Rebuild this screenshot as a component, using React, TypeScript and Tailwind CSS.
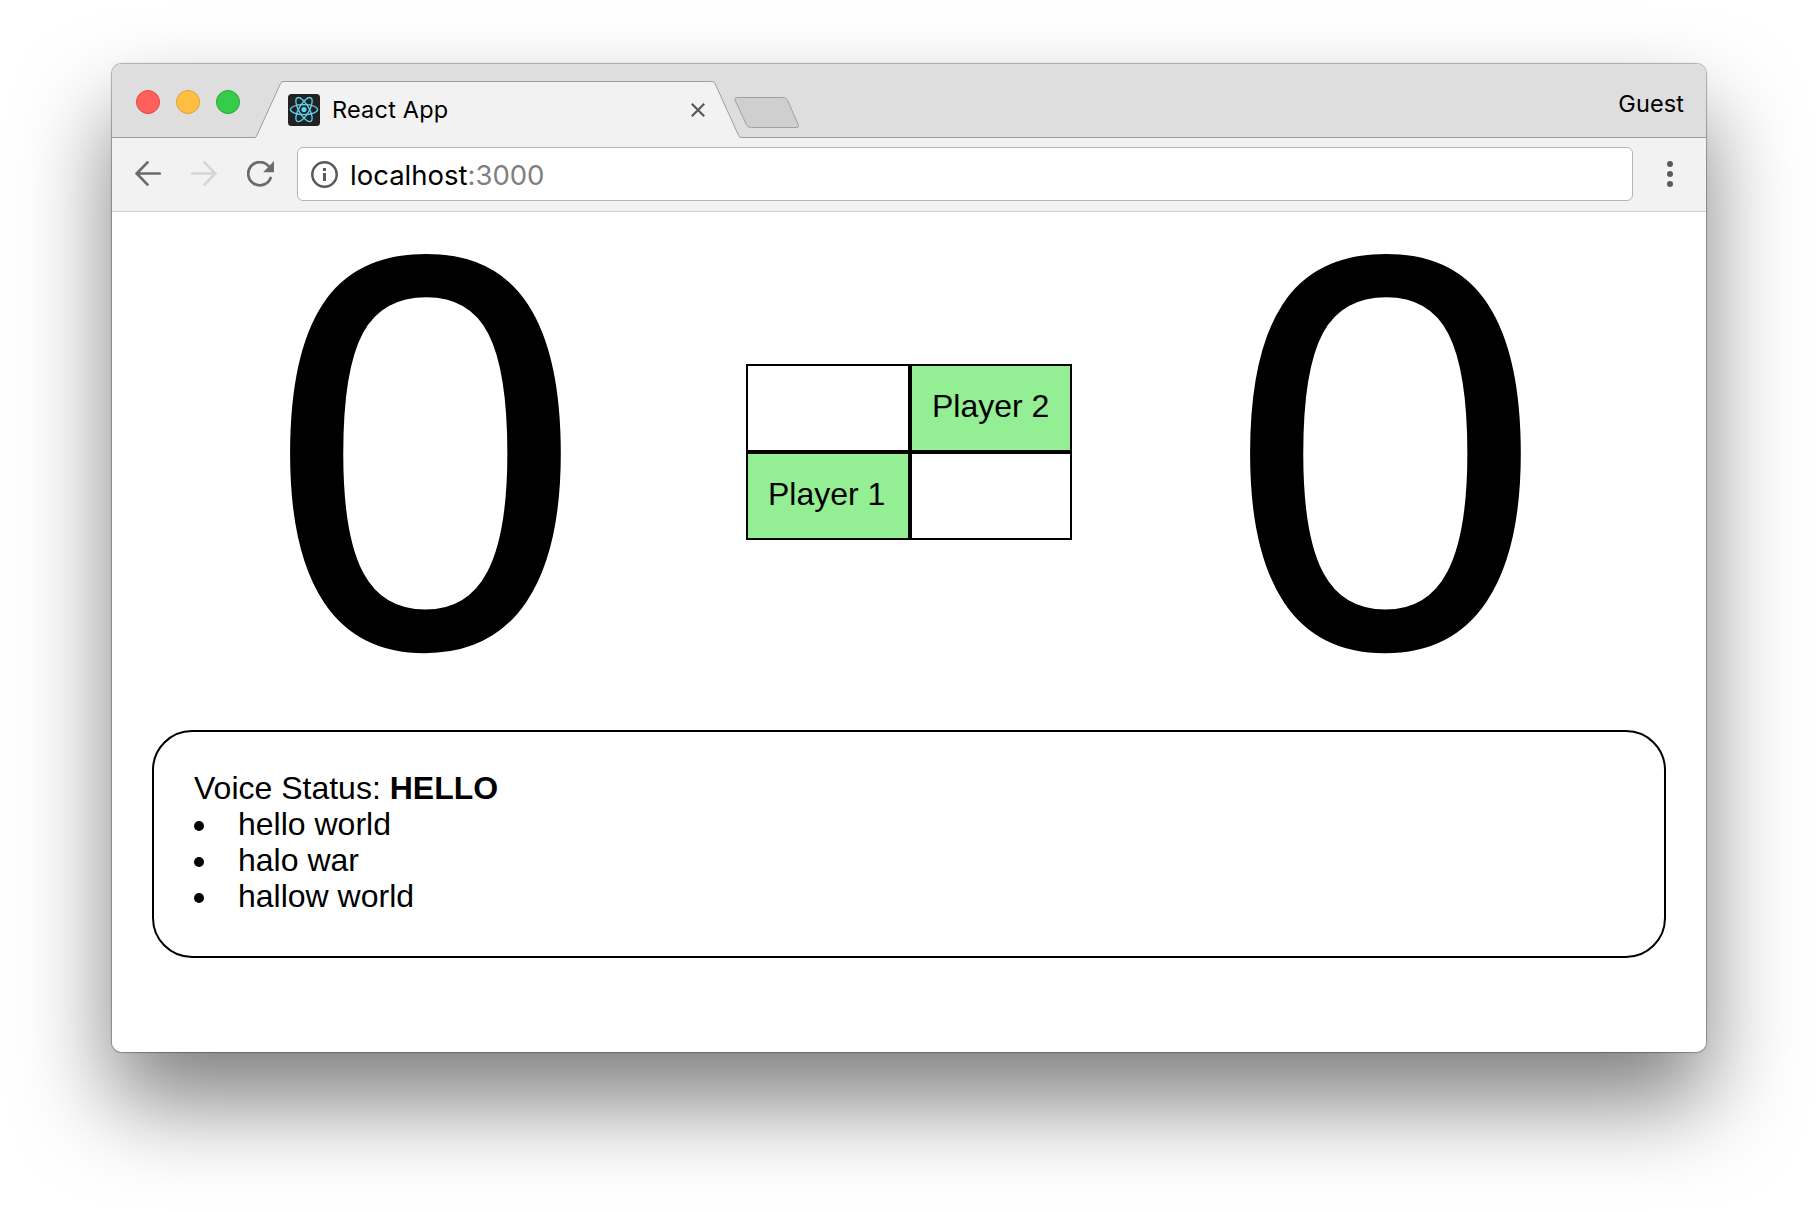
import React from "react";

const phrases = ["hello world", "halo war", "hallow world"];

function TrafficLights() {
  return (
    <div className="flex w-[144px] shrink-0 gap-4 pt-[26px] pl-6">
      <span className="size-6 rounded-full border border-[#e2463f] bg-[#ff605c]" />
      <span className="size-6 rounded-full border border-[#dfa033] bg-[#ffbf41]" />
      <span className="size-6 rounded-full border border-[#27a834] bg-[#35cb4b]" />
    </div>
  );
}

function ReactLogo() {
  return (
    <svg className="size-8 shrink-0" viewBox="0 0 32 32" fill="none">
      <rect width="32" height="32" rx="3.5" fill="#222" />
      <g stroke="#5fd3f3" strokeWidth="1.3">
        <ellipse cx="16" cy="15.6" rx="13.6" ry="5.1" />
        <ellipse cx="16" cy="15.6" rx="13.6" ry="5.1" transform="rotate(60 16 15.6)" />
        <ellipse cx="16" cy="15.6" rx="13.6" ry="5.1" transform="rotate(120 16 15.6)" />
      </g>
      <circle cx="16" cy="15.6" r="2.6" fill="#5fd3f3" />
    </svg>
  );
}

function TabStrip() {
  return (
    <div className="flex h-[74px] border-b border-[#9d9d9d] bg-[#dedede]">
      <TrafficLights />
      <div className="relative -ml-px h-[74px] w-[486px] shrink-0">
        <svg className="absolute inset-0" width="486" height="74" viewBox="0 0 486 74" fill="none">
          <path
            d="M0 74 Q0.6 73.5 1.4 72.5 L25.6 19.4 Q26.6 17.5 29 17.5 H456.5 Q459 17.5 460 19.4 L483.6 71.5 Q484.4 73.5 486 73.5 V74 Z"
            fill="#f2f2f2"
          />
          <path
            d="M0 73.5 Q0.8 73.5 1.6 72 L25.6 19.4 Q26.6 17.5 29 17.5 H456.5 Q459 17.5 460 19.4 L483.6 71.5 Q484.4 73.5 486 73.5"
            stroke="#9d9d9d"
          />
        </svg>
        <div className="relative mt-[30px] flex h-8 items-center pl-[33px]">
          <ReactLogo />
          <span className="ml-3 flex-1 font-[Inter] text-[23.5px] leading-8 tracking-[0.2px] text-black">React App</span>
          <svg className="mr-[36px] size-[14px]" viewBox="0 0 14 14" stroke="#5a5a5a" strokeWidth="2.2">
            <path d="M0.8 0.8 13.2 13.2M13.2 0.8 0.8 13.2" />
          </svg>
        </div>
      </div>
      <svg className="mt-8 -ml-[7px] shrink-0" width="68" height="36" viewBox="0 0 68 36" fill="none">
        <path
          d="M3.5 1.5 H48.5 Q52 1.5 53.5 4.2 L64.4 29 Q65.4 31.5 62.5 31.5 H17.5 Q14 31.5 12.6 29 L1.2 4.5 Q0 1.5 3.5 1.5 Z"
          fill="#cfcfcf"
          stroke="#9f9f9f"
        />
      </svg>
      <span className="ml-auto mr-[22px] pt-6 font-[Inter] text-[23.5px] leading-8 tracking-[0.1px] text-black">Guest</span>
    </div>
  );
}

function Toolbar() {
  return (
    <div className="flex h-[74px] items-center border-b border-[#d0d0d0] bg-[#f2f2f2] pb-px pl-[23px]">
      <svg className="size-[26px]" viewBox="0 0 26 26" fill="none" stroke="#6b6b6b" strokeWidth="2.7" strokeLinecap="round">
        <path d="M24.7 12.5H2M12.5 1.4 1.7 12.5 12.5 23.6" />
      </svg>
      <svg className="ml-[30px] size-[26px]" viewBox="0 0 26 26" fill="none" stroke="#d6d6d6" strokeWidth="2.7" strokeLinecap="round">
        <path d="M1.3 12.5H24M13.5 1.4 24.3 12.5 13.5 23.6" />
      </svg>
      <svg className="ml-[30px] h-[26px] w-[27px]" viewBox="0 0 27 26" fill="none">
        <path d="M23.6 17A11.6 11.6 0 1 1 21.4 4.9" stroke="#6b6b6b" strokeWidth="2.8" strokeLinecap="round" />
        <path d="M27 0V11.2H16.2Z" fill="#6b6b6b" />
      </svg>
      <div className="ml-[23px] flex h-[54px] w-[1336px] items-center rounded-[6px] border border-[#b5b5b5] bg-white pl-[13px]">
        <svg className="size-[27px]" viewBox="0 0 27 27" fill="none">
          <circle cx="13.5" cy="13.5" r="12.2" stroke="#5a5a5a" strokeWidth="2.5" />
          <path d="M12 7h3v3h-3zM12 12h3v8h-3z" fill="#5a5a5a" />
        </svg>
        <span className="ml-3 pt-0.5 font-[Inter] text-[27.5px] leading-8 text-black">
          localhost<span className="text-[#808080]">:3000</span>
        </span>
      </div>
      <div className="ml-[34px] flex flex-col gap-1">
        <span className="size-[6px] rounded-full bg-[#5a5a5a]" />
        <span className="size-[6px] rounded-full bg-[#5a5a5a]" />
        <span className="size-[6px] rounded-full bg-[#5a5a5a]" />
      </div>
    </div>
  );
}

function Score({ value }: { value: number }) {
  return (
    <div className="w-[320px] pl-px text-[559px] leading-[480px] [-webkit-text-stroke:3.5px_black]">{value}</div>
  );
}

function Court() {
  const cell = "h-[88px] border-2 border-black px-5 leading-[80px]";
  return (
    <div className="grid grid-cols-[164px_162px] whitespace-nowrap">
      <div className={cell} />
      <div className={`${cell} bg-[#93ee94]`}>Player 2</div>
      <div className={`${cell} bg-[#93ee94]`}>Player 1</div>
      <div className={cell} />
    </div>
  );
}

export default function App() {
  return (
    <div className="h-[1212px] w-[1818px] overflow-hidden bg-white px-[112px] pt-16">
      <div className="h-[988px] w-[1594px] rounded-[10px] shadow-[0_0_1px_1px_rgba(0,0,0,0.3),0_50px_90px_rgba(0,0,0,0.5)]">
        <div className="h-full overflow-hidden rounded-[10px] bg-white">
          <TabStrip />
          <Toolbar />
          <main className="font-['Liberation_Sans',Arial,sans-serif] text-[32px] leading-9 text-black">
            <div className="flex h-[480px] items-center justify-evenly">
              <Score value={0} />
              <Court />
              <Score value={0} />
            </div>
            <section className="mx-10 mt-[38px] rounded-[40px] border-2 border-black px-10 pt-[38px] pb-[42px]">
              <p>
                Voice Status: <b>HELLO</b>
              </p>
              <ul>
                {phrases.map((phrase) => (
                  <li key={phrase} className="flex items-center">
                    <span className="mr-[34px] mt-[3px] size-[10px] rounded-full bg-black" />
                    {phrase}
                  </li>
                ))}
              </ul>
            </section>
          </main>
        </div>
      </div>
    </div>
  );
}
